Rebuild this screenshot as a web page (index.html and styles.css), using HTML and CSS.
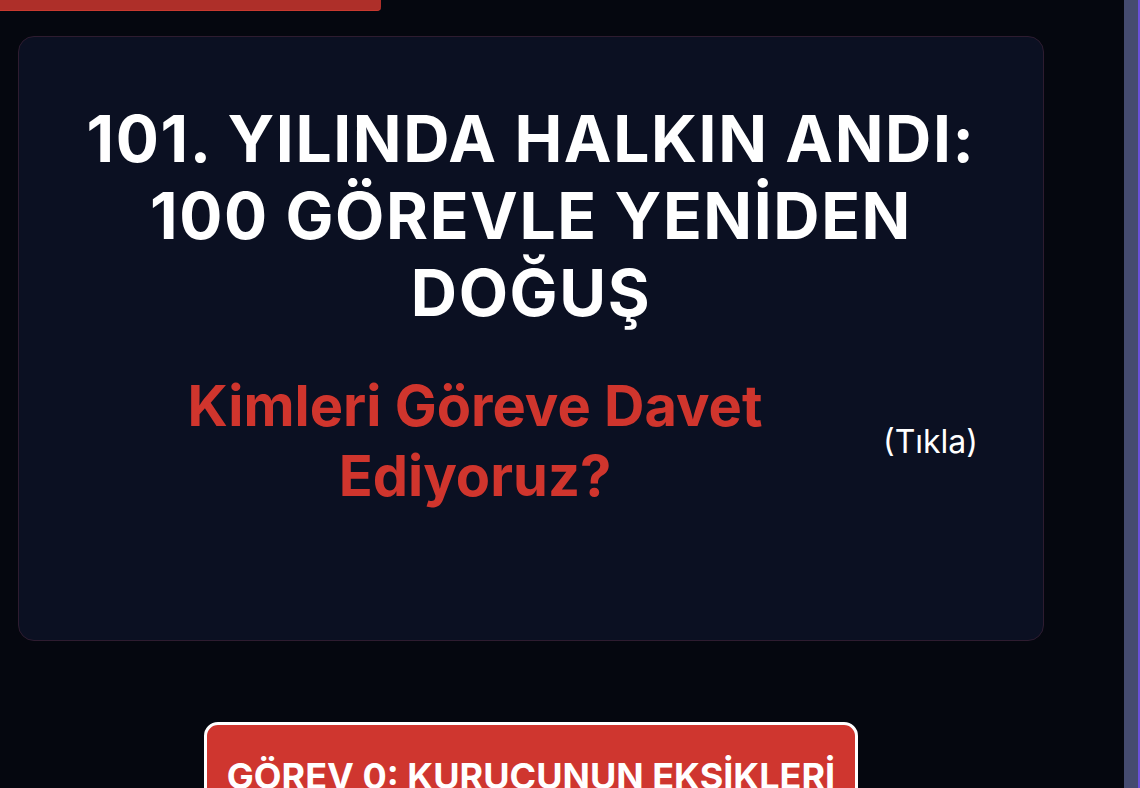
FILE: index.html
```html
<!DOCTYPE html>
<html lang="tr">
<head>
<meta charset="utf-8">
<title>101. Yılında Halkın Andı</title>
<link rel="stylesheet" href="styles.css">
</head>
<body>
  <div class="page">
    <main class="main">
      <div class="top-bar"></div>
      <section class="hero-card">
        <h1 class="hero-title">101. YILINDA HALKIN ANDI: 100 GÖREVLE YENİDEN DOĞUŞ</h1>
        <div class="invite-row">
          <h2 class="invite-title">Kimleri Göreve Davet Ediyoruz?</h2>
          <span class="invite-hint">(Tıkla)</span>
        </div>
      </section>
      <div class="task-wrap">
        <button class="task-button">GÖREV 0: KURUCUNUN EKSİKLERİ</button>
      </div>
    </main>
    <div class="side-strip"></div>
  </div>
</body>
</html>
```

FILE: styles.css
```css
* { box-sizing: border-box; }

html, body {
  margin: 0;
  padding: 0;
  height: 100%;
  background: #05070f;
  font-family: Inter, "Noto Sans", sans-serif;
  color: #ffffff;
}

.page {
  display: flex;
  height: 100vh;
  overflow: hidden;
}

.main {
  flex: 1;
  min-width: 0;
  overflow: hidden;
}

.side-strip {
  width: 16px;
  flex: none;
  background: #454b70;
  border-right: 2px solid #6a50dc;
}

.top-bar {
  width: 381px;
  height: 11px;
  background: #ae2f29;
  border-bottom: 1px solid #c8392f;
  border-radius: 0 0 4px 0;
}

.hero-card {
  margin: 25px 80px 0 18px;
  background: #0b1022;
  border: 1px solid #2e1c30;
  border-radius: 16px;
  padding: 64px 64px 128px;
  min-height: 605px;
}

.hero-title {
  margin: 0;
  font-size: 64px;
  line-height: 76.8px;
  font-weight: 700;
  text-align: center;
  letter-spacing: 1.6px;
  color: #ffffff;
}

.invite-row {
  margin-top: 40px;
  display: flex;
  align-items: center;
  gap: 16px;
}

.invite-title {
  flex: 1;
  margin: 0;
  font-size: 56px;
  line-height: 70px;
  font-weight: 700;
  text-align: center;
  color: #d0352d;
}

.invite-hint {
  font-size: 32px;
  font-weight: 400;
  color: #ffffff;
  margin-right: 1px;
}

.task-wrap {
  display: flex;
  justify-content: center;
  margin: 81px 80px 0 18px;
}

.task-button {
  background: #cf362f;
  border: 3px solid #ffffff;
  border-radius: 14px;
  padding: 29px 20px;
  font-family: Inter, "Noto Sans", sans-serif;
  font-size: 36px;
  font-weight: 700;
  color: #ffffff;
  letter-spacing: 0;
  min-width: 652px;
}
```
